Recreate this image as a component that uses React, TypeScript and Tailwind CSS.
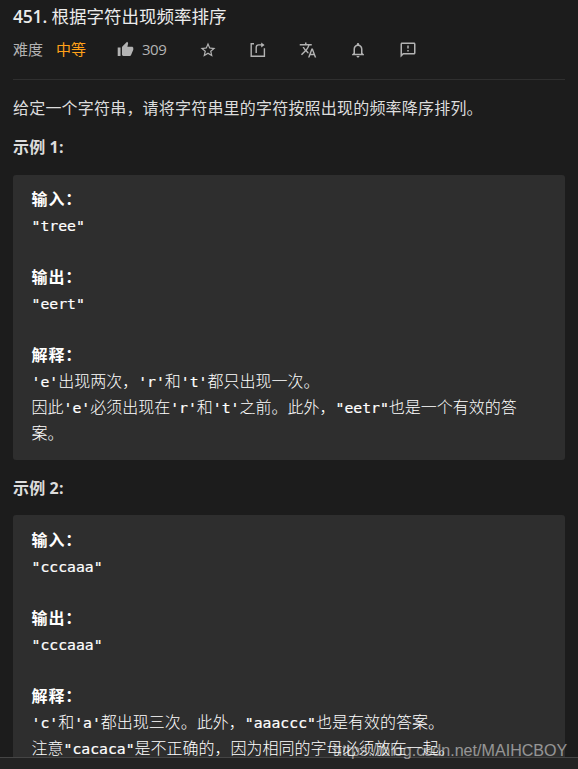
import type { ReactNode } from 'react'
import { MdNotificationsNone, MdOutlineFeedback, MdStarBorder, MdThumbUp, MdTranslate } from 'react-icons/md'

const examples = [
    {
        title: '示例 1:',
        input: '"tree"',
        output: '"eert"',
        notes: ["'e'出现两次，'r'和't'都只出现一次。", "因此'e'必须出现在'r'和't'之前。此外，\"eetr\"也是一个有效的答案。"],
    },
    {
        title: '示例 2:',
        input: '"cccaaa"',
        output: '"cccaaa"',
        notes: ["'c'和'a'都出现三次。此外，\"aaaccc\"也是有效的答案。", '注意"cacaca"是不正确的，因为相同的字母必须放在一起。'],
    },
]

// Quoted strings are set in the mono face, everything else in the CJK one
function Line({ text }: { text: string }) {
    return (
        <div className="min-h-[26px] font-light">
            {text.split(/(["'][a-z]+["'])/).map((part, i) =>
                i % 2 ? (
                    <span key={i} className="font-['DejaVu_Sans_Mono',monospace] text-[14.75px] leading-none font-normal [-webkit-text-stroke:0.2px_white]">{part}</span>
                ) : (
                    part
                )
            )}
        </div>
    )
}

function Label({ children }: { children: ReactNode }) {
    return <div className="h-[26px] font-bold tracking-[0.9px]">{children}</div>
}

function Example({ title, input, output, notes }: (typeof examples)[number]) {
    return (
        <section>
            <h2 className="h-[26px] text-base leading-[26px] font-bold tracking-[0.15px] text-[#dcdcdc]">{title}</h2>
            <div className="mt-[14.7px] mb-[15px] h-[285px] rounded-[3px] bg-[#2e2e2e] pt-[10.7px] pr-[38px] pl-[18.5px] font-['Noto_Sans_CJK_SC',sans-serif] text-base leading-[26px] text-white">
                <Label>输入：</Label>
                <Line text={input} />
                <Line text="" />
                <Label>输出：</Label>
                <Line text={output} />
                <Line text="" />
                <Label>解释：</Label>
                {notes.map((note) => (
                    <Line key={note} text={note} />
                ))}
            </div>
        </section>
    )
}

function ShareIcon() {
    return (
        <svg className="h-[18px] w-[18px]" viewBox="0 0 18 18" fill="none" stroke="currentColor" strokeWidth="1.4">
            <path d="M5 2.7H2.2v12.6h13.2V7.2" />
            <path d="M7.2 12V6.4Q7.2 3.9 9.7 3.9H13" />
            <path d="M12.2 1.4 15.6 3.9 12.2 6.4Z" fill="currentColor" stroke="none" />
        </svg>
    )
}

export default function App() {
    return (
        <div className="relative flex h-[769px] w-[578px] flex-col overflow-hidden bg-[#1c1c1c] font-['Open_Sans','Noto_Sans_CJK_SC',sans-serif]">
            <main className="h-[757px] shrink-0 overflow-hidden px-[13px]">
                <h1 className="mt-[3px] h-[26px] text-[17.5px] leading-[26px] font-normal whitespace-nowrap text-[#ebebeb]">
                    <span className="font-semibold tracking-[-0.2px]">451.</span> 根据字符出现频率排序
                </h1>
                <div className="flex h-[40px] items-center text-[15px] text-[#b3b3b3]">
                    <span className="w-[43px]">难度</span>
                    <span className="w-[61px] text-[#ffa119]">中等</span>
                    <MdThumbUp className="mt-px h-[17px] w-[17px]" />
                    <span className="ml-[8px] w-[57px] tracking-[-0.5px]">309</span>
                    <div className="flex items-center gap-[32px] pt-[2px] text-[18px]">
                        <MdStarBorder />
                        <ShareIcon />
                        <MdTranslate />
                        <MdNotificationsNone />
                        <MdOutlineFeedback />
                    </div>
                </div>
                <div className="mt-[10px] border-b border-[#2f2f2f]" />
                <p className="mt-[15px] mb-[13px] h-[26px] text-base leading-[26px] tracking-[0.2px] whitespace-nowrap text-[#dcdcdc]">
                    给定一个字符串，请将字符串里的字符按照出现的频率降序排列。
                </p>
                {examples.map((example) => (
                    <Example key={example.title} {...example} />
                ))}
            </main>
            <footer className="h-[12px] border-t border-[#454545] bg-[#232323]" />
            <span className="absolute top-[738px] left-[333px] font-['Liberation_Sans',sans-serif] text-[16.1px] leading-[24px] whitespace-nowrap text-white/50">
                https://blog.csdn.net/MAIHCBOY
            </span>
        </div>
    )
}
